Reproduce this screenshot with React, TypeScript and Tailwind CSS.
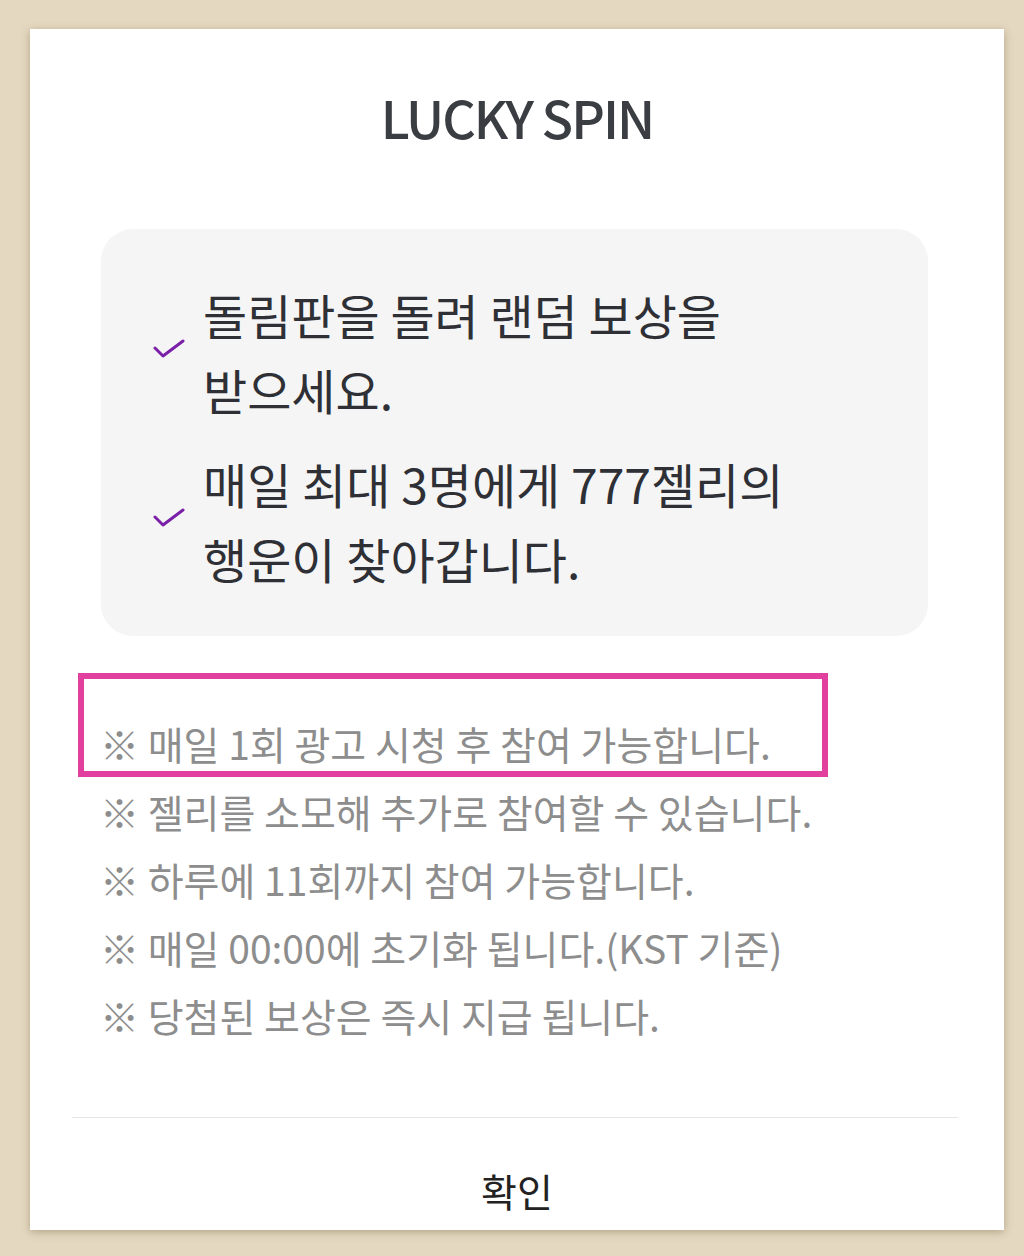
const FONT = { fontFamily: '"Noto Sans CJK KR", "Noto Sans", sans-serif' };

const items = [
  ["돌림판을 돌려 랜덤 보상을", "받으세요."],
  ["매일 최대 3명에게 777젤리의", "행운이 찾아갑니다."],
];

const notes = [
  "※ 매일 1회 광고 시청 후 참여 가능합니다.",
  "※ 젤리를 소모해 추가로 참여할 수 있습니다.",
  "※ 하루에 11회까지 참여 가능합니다.",
  "※ 매일 00:00에 초기화 됩니다.(KST 기준)",
  "※ 당첨된 보상은 즉시 지급 됩니다.",
];

function Check() {
  return (
    <svg width="32" height="20" viewBox="0 0 32 20" fill="none" className="shrink-0 -mt-[6px]">
      <polyline points="2,9 10,17 30,2" stroke="#7a1fa8" strokeWidth="3" strokeLinecap="round" strokeLinejoin="round" />
    </svg>
  );
}

export default function App() {
  return (
    <div className="w-[1024px] h-[1256px] bg-[#e4d8c1] pt-[29px] pl-[30px]" style={FONT}>
      <div className="w-[974px] h-[1201px] bg-white shadow-[0_2px_8px_rgba(120,100,60,0.45)] flex flex-col">
        {/* title */}
        <h1 className="pt-[57px] text-center text-[52px] leading-[62px] font-medium tracking-[-2px] text-[#3a3d42]">
          LUCKY SPIN
        </h1>

        {/* feature box */}
        <div className="mt-[81px] ml-[71px] w-[827px] rounded-[32px] bg-[#f5f5f5] pt-[48px] pb-[40px] pl-[52px] flex flex-col gap-[19px]">
          {items.map((lines, i) => (
            <div key={i} className="flex items-center gap-[18px]">
              <Check />
              <div className="text-[48px] leading-[75px] text-[#2e3035]">
                {lines.map((l) => (
                  <div key={l}>{l}</div>
                ))}
              </div>
            </div>
          ))}
        </div>

        {/* notes */}
        <div className="relative mt-[73px] pl-[70px] flex flex-col">
          <div className="absolute left-[48px] top-[-36px] w-[750px] h-[104px] border-[6px] border-[#e2409e]" />
          {notes.map((n) => (
            <div key={n} className="text-[39px] leading-[68px] text-[#8d8d8d]">
              {n}
            </div>
          ))}
        </div>

        <div className="mt-auto ml-[42px] w-[886px] h-px bg-[#e6e6e6]" />
        <button className="h-[112px] text-[39px] text-[#222] pt-[32px]">확인</button>
      </div>
    </div>
  );
}
